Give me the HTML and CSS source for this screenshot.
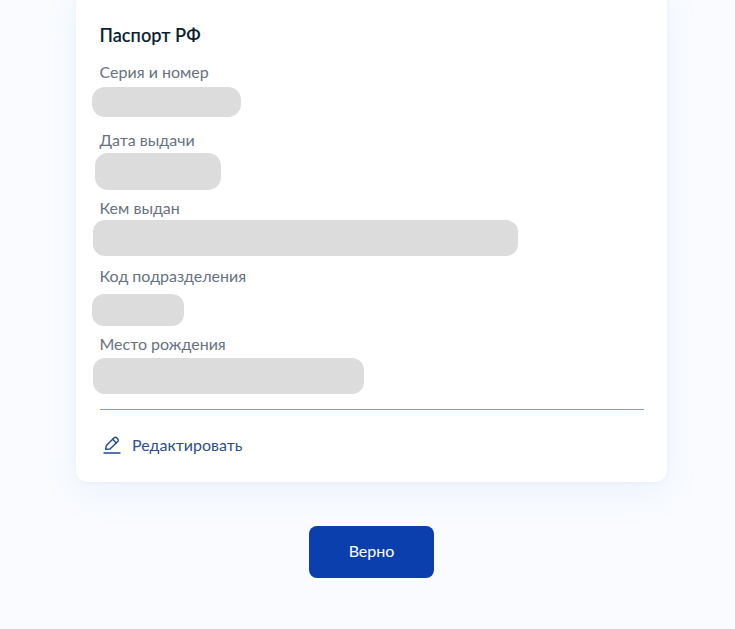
FILE: index.html
```html
<!DOCTYPE html>
<html lang="ru">
<head>
    <meta charset="UTF-8">
    <meta name="viewport" content="width=device-width, initial-scale=1.0">
    <title>Паспорт РФ</title>
    <link rel="stylesheet" href="styles.css">
</head>
<body>

<main class="page">
    <section class="card">
        <h2 class="card-title">Паспорт РФ</h2>

        <div class="field">
            <div class="field-label">Серия и номер</div>
            <div class="mask mask-series"></div>
        </div>
        <div class="field">
            <div class="field-label">Дата выдачи</div>
            <div class="mask mask-date"></div>
        </div>
        <div class="field">
            <div class="field-label">Кем выдан</div>
            <div class="mask mask-issuer"></div>
        </div>
        <div class="field">
            <div class="field-label">Код подразделения</div>
            <div class="mask mask-code"></div>
        </div>
        <div class="field">
            <div class="field-label">Место рождения</div>
            <div class="mask mask-birth"></div>
        </div>

        <div class="divider"></div>

        <a class="edit-link" href="#">
            <svg class="edit-icon" width="18" height="18" viewBox="0 0 18 18" fill="none" stroke="#1f4a94" stroke-width="1.4" stroke-linejoin="round" stroke-linecap="round">
                <path d="M2.6 13.2 L3.4 9.6 L10.9 1.9 C11.7 1.1 12.9 1.1 13.8 1.9 L14.6 2.7 C15.5 3.6 15.5 4.8 14.7 5.6 L7 13 Z"/>
                <path d="M9.6 3.3 L13.4 7"/>
                <path d="M1 17 H17"/>
            </svg>
            <span>Редактировать</span>
        </a>
    </section>

    <button class="btn-primary" type="button">Верно</button>
</main>

</body>
</html>
```

FILE: styles.css
```css
html, body {
    margin: 0;
    height: 100%;
}
body {
    font-family: Lato, "Noto Sans", "Open Sans", sans-serif;
    background: #f9fbff;
    overflow: hidden;
}
.page {
    display: flex;
    flex-direction: column;
    align-items: flex-start;
    padding-left: 76px;
}
.card {
    box-sizing: border-box;
    width: 591px;
    height: 498px;
    margin-top: -16px;
    padding: 40px 24px 0 23.5px;
    background: #fff;
    border-radius: 12px;
    box-shadow: 0 1px 4px rgba(102, 150, 220, 0.07), 0 12px 36px rgba(102, 150, 220, 0.08);
}
.card-title {
    margin: 0 0 16px;
    height: 22px;
    font-size: 18.2px;
    line-height: 23px;
    font-weight: 600;
    color: #0b1f33;
}
.field {
    height: 68px;
}
.field-label {
    height: 20px;
    font-size: 16px;
    line-height: 20px;
    color: #66727f;
}
.mask {
    background: #dcdcdc;
    border-radius: 12px;
}
.mask-series {
    width: 149px;
    height: 30px;
    margin: 4.5px 0 0 -7.5px;
    border-radius: 13px;
}
.mask-date {
    width: 126px;
    height: 37px;
    margin: 3px 0 0 -4.5px;
    border-radius: 13px;
}
.mask-issuer {
    width: 425px;
    height: 36px;
    margin: 2px 0 0 -6.5px;
}
.mask-code {
    width: 92px;
    height: 32px;
    margin: 8px 0 0 -7.5px;
}
.mask-birth {
    width: 271px;
    height: 36px;
    margin: 4px 0 0 -6.5px;
}
.divider {
    height: 1px;
    margin-top: 7px;
    background: #7ea3c8;
    width: 544.5px;
}
.edit-link {
    display: flex;
    align-items: center;
    gap: 11px;
    margin: 25px 0 0 3.5px;
    font-size: 16px;
    line-height: 20px;
    color: #2c4f8c;
    text-decoration: none;
}
.btn-primary {
    width: 125px;
    height: 52px;
    margin: 44px 0 0 233px;
    padding: 0 0 4px;
    border: none;
    border-radius: 8px;
    background: #0b3fae;
    color: #fff;
    font-family: inherit;
    font-size: 16px;
    cursor: pointer;
}
```
